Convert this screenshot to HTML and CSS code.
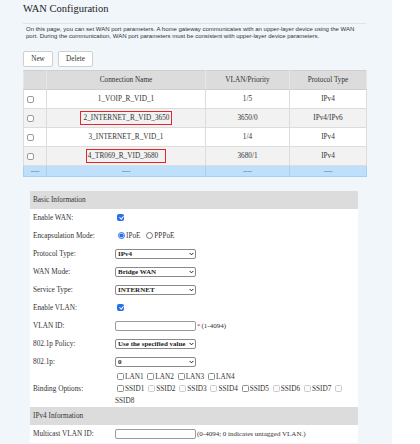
FILE: index.html
```html
<!DOCTYPE html>
<html>
<head>
<meta charset="utf-8">
<title>WAN Configuration</title>
<link rel="stylesheet" href="styles.css">
</head>
<body>
<div class="page">
  <h1 class="title">WAN Configuration</h1>
  <p class="desc">On this page, you can set WAN port parameters. A home gateway communicates with an upper-layer device using the WAN<br>port. During the communication, WAN port parameters must be consistent with upper-layer device parameters.</p>
  <div class="actions">
    <button class="btn btn-new">New</button>
    <button class="btn btn-del">Delete</button>
  </div>
  <table class="list">
    <colgroup>
      <col class="c-chk"><col class="c-name"><col class="c-vlan"><col class="c-proto">
    </colgroup>
    <thead>
      <tr><th></th><th>Connection Name</th><th>VLAN/Priority</th><th>Protocol Type</th></tr>
    </thead>
    <tbody>
      <tr><td class="chk"><input type="checkbox" class="box"></td><td>1_VOIP_R_VID_1</td><td>1/5</td><td>IPv4</td></tr>
      <tr class="alt"><td class="chk"><input type="checkbox" class="box"></td><td><span class="mark mark-a">2_INTERNET_R_VID_3650</span></td><td>3650/0</td><td>IPv4/IPv6</td></tr>
      <tr><td class="chk"><input type="checkbox" class="box"></td><td>3_INTERNET_R_VID_1</td><td>1/4</td><td>IPv4</td></tr>
      <tr class="alt"><td class="chk"><input type="checkbox" class="box"></td><td><span class="mark mark-b">4_TR069_R_VID_3680</span></td><td>3680/1</td><td>IPv4</td></tr>
      <tr class="new"><td>----</td><td>----</td><td>----</td><td>----</td></tr>
    </tbody>
  </table>

  <div class="form">
    <div class="sec-head">Basic Information</div>
    <table class="fields">
      <tr><td class="lbl">Enable WAN:</td><td class="val"><input type="checkbox" class="box" checked></td></tr>
      <tr><td class="lbl">Encapsulation Mode:</td><td class="val"><input type="radio" name="enc" class="rad" checked><span class="opt">IPoE</span> <input type="radio" name="enc" class="rad"><span class="opt">PPPoE</span></td></tr>
      <tr><td class="lbl">Protocol Type:</td><td class="val"><span class="selwrap"><select class="sel"><option>IPv4</option></select><svg class="chev" viewBox="0 0 6 4" width="6" height="4"><path d="M0.7 0.7 L3 3 L5.3 0.7" fill="none" stroke="#222" stroke-width="1.2"/></svg></span></td></tr>
      <tr><td class="lbl">WAN Mode:</td><td class="val"><span class="selwrap"><select class="sel"><option>Bridge WAN</option></select><svg class="chev" viewBox="0 0 6 4" width="6" height="4"><path d="M0.7 0.7 L3 3 L5.3 0.7" fill="none" stroke="#222" stroke-width="1.2"/></svg></span></td></tr>
      <tr><td class="lbl">Service Type:</td><td class="val"><span class="selwrap"><select class="sel"><option>INTERNET</option></select><svg class="chev" viewBox="0 0 6 4" width="6" height="4"><path d="M0.7 0.7 L3 3 L5.3 0.7" fill="none" stroke="#222" stroke-width="1.2"/></svg></span></td></tr>
      <tr><td class="lbl">Enable VLAN:</td><td class="val"><input type="checkbox" class="box" checked></td></tr>
      <tr><td class="lbl">VLAN ID:</td><td class="val"><input type="text" class="txt"><span class="req">*</span><span class="hint">(1-4094)</span></td></tr>
      <tr><td class="lbl">802.1p Policy:</td><td class="val"><span class="selwrap"><select class="sel"><option>Use the specified value</option></select><svg class="chev" viewBox="0 0 6 4" width="6" height="4"><path d="M0.7 0.7 L3 3 L5.3 0.7" fill="none" stroke="#222" stroke-width="1.2"/></svg></span></td></tr>
      <tr><td class="lbl">802.1p:</td><td class="val"><span class="selwrap"><select class="sel"><option>0</option></select><svg class="chev" viewBox="0 0 6 4" width="6" height="4"><path d="M0.7 0.7 L3 3 L5.3 0.7" fill="none" stroke="#222" stroke-width="1.2"/></svg></span></td></tr>
      <tr class="multi"><td class="lbl">Binding Options:</td><td class="val bind"><input type="checkbox" class="box"><span>LAN1</span> <input type="checkbox" class="box"><span>LAN2</span> <input type="checkbox" class="box"><span>LAN3</span> <input type="checkbox" class="box"><span>LAN4</span><br><input type="checkbox" class="box"><span>SSID1</span> <input type="checkbox" class="box" disabled><span>SSID2</span> <input type="checkbox" class="box" disabled><span>SSID3</span> <input type="checkbox" class="box" disabled><span>SSID4</span> <input type="checkbox" class="box"><span>SSID5</span> <input type="checkbox" class="box" disabled><span>SSID6</span> <input type="checkbox" class="box" disabled><span>SSID7</span> <input type="checkbox" class="box" disabled><span>SSID8</span></td></tr>
    </table>
    <div class="sec-head">IPv4 Information</div>
    <table class="fields">
      <tr><td class="lbl">Multicast VLAN ID:</td><td class="val"><input type="text" class="txt"><span class="hint">(0-4094; 0 indicates untagged VLAN.)</span></td></tr>
    </table>
  </div>
</div>
</body>
</html>
```

FILE: styles.css
```css
html, body {
  margin: 0;
  padding: 0;
  background: #ffffff;
}

body {
  font-family: "Liberation Serif", "Times New Roman", serif;
  color: #333333;
}

.page {
  width: 392px;
  min-height: 444px;
  background: #f1f6fb;
  padding: 0 0 20px 23px;
  box-sizing: border-box;
  overflow: hidden;
}

.title {
  margin: 0;
  width: 343px;
  height: 24px;
  padding-top: 3px;
  box-sizing: border-box;
  font-family: "Liberation Serif", "Times New Roman", serif;
  font-size: 10.5px;
  line-height: 12px;
  font-weight: normal;
  color: #222222;
  border-bottom: 1px solid #dfe4ea;
}

.desc {
  margin: 2px 0 0 0;
  padding-left: 3px;
  font-family: "Liberation Sans", Arial, sans-serif;
  font-size: 6px;
  line-height: 7px;
  color: #333333;
  white-space: nowrap;
}

.actions {
  display: flex;
  gap: 5px;
  margin-top: 11px;
}

.btn {
  height: 16px;
  padding: 0;
  background: #ffffff;
  border: 1px solid #cfcfcf;
  border-radius: 2px;
  font-family: "Liberation Serif", "Times New Roman", serif;
  font-size: 7.2px;
  color: #333333;
}

.btn-new { width: 30px; }
.btn-del { width: 35px; }

.list {
  margin-top: 3px;
  width: 343px;
  border-collapse: collapse;
  table-layout: fixed;
  font-size: 7.25px;
  color: #333333;
  text-align: center;
}

.c-chk { width: 23px; }
.c-name { width: 159px; }
.c-vlan { width: 84px; }
.c-proto { width: 77px; }

.list th,
.list td {
  padding: 0;
  border: 1px solid #dcdcdc;
  font-weight: normal;
}

.list th {
  height: 18px;
  background: #dcdcdc;
  border-color: #cfcfcf #e6e6e6;
}

.list tbody tr td {
  height: 18px;
  background: #ffffff;
}

.list tbody tr.alt td {
  background: #f2f2f2;
}

.list tbody tr.new td {
  height: 10px;
  background: #bfe0fb;
  border-color: #a9d0f0;
  font-size: 6.5px;
  line-height: 8px;
  color: #444444;
}

.list td.chk {
  text-align: left;
  padding-left: 3px;
}

.box {
  appearance: none;
  -webkit-appearance: none;
  position: relative;
  box-sizing: border-box;
  width: 7px;
  height: 7px;
  margin: 0 1px 0 2px;
  vertical-align: -1px;
  background: #ffffff;
  border: 1px solid #8c8c8c;
  border-radius: 1.5px;
}

.box:checked {
  background: #2b6fe6;
  border-color: #2b6fe6;
}

.box:checked::after {
  content: "";
  position: absolute;
  left: 1.6px;
  top: 0.2px;
  width: 1.5px;
  height: 3.2px;
  border: solid #ffffff;
  border-width: 0 1px 1px 0;
  transform: rotate(40deg);
}

.box:disabled {
  border-color: #cccccc;
  background: #fafafa;
}

.list .box {
  margin: 0;
  vertical-align: middle;
  border-color: #9a9a9a;
  border-radius: 2px;
}

.mark {
  display: inline-block;
  border: 1.2px solid #e3262b;
  line-height: 10px;
}

.mark-a { padding: 1px 2px 1px 3px; }
.mark-b { padding: 1px 7px 1px 1px; }

.form {
  margin: 14px 0 0 7px;
  width: 328px;
  background: #ffffff;
}

.sec-head {
  height: 18px;
  line-height: 18px;
  padding-left: 3px;
  background: #dcdcdc;
  font-size: 7.25px;
  color: #333333;
}

.fields {
  width: 328px;
  border-collapse: collapse;
  font-size: 7.25px;
  color: #333333;
}

.fields td {
  padding: 0;
  height: 18px;
  vertical-align: middle;
}

.fields td.lbl {
  width: 82px;
  padding-left: 3px;
  white-space: nowrap;
}

.rad {
  width: 7px;
  height: 7px;
  margin: 0 1px 0 3px;
  vertical-align: -1px;
  accent-color: #2b6fe6;
}

.opt {
  margin-right: 1px;
}

.selwrap {
  position: relative;
  display: inline-block;
  vertical-align: middle;
}

.sel {
  display: block;
  width: 81px;
  height: 10px;
  margin: 0;
  padding: 0 0 0 2px;
  appearance: none;
  -webkit-appearance: none;
  background: #ffffff;
  border: 1px solid #8a8a8a;
  border-radius: 2px;
  font-family: "Liberation Serif", "Times New Roman", serif;
  font-size: 7px;
  font-weight: bold;
  line-height: 8px;
  color: #1a1a1a;
}

.chev {
  position: absolute;
  right: 2px;
  top: 3px;
  width: 5px;
  height: 4px;
}

.txt {
  width: 81px;
  height: 10px;
  margin: 0;
  padding: 0;
  box-sizing: border-box;
  border: 1px solid #9a9a9a;
  border-radius: 2px;
  background: #ffffff;
  vertical-align: middle;
}

.req {
  color: #e3262b;
  font-size: 7px;
  margin: 0 0 0 1px;
  vertical-align: middle;
}

.hint {
  font-size: 7px;
  vertical-align: middle;
  margin-left: 1px;
}

.fields tr.multi td {
  height: 36px;
}

.bind {
  line-height: 12px;
}
```
